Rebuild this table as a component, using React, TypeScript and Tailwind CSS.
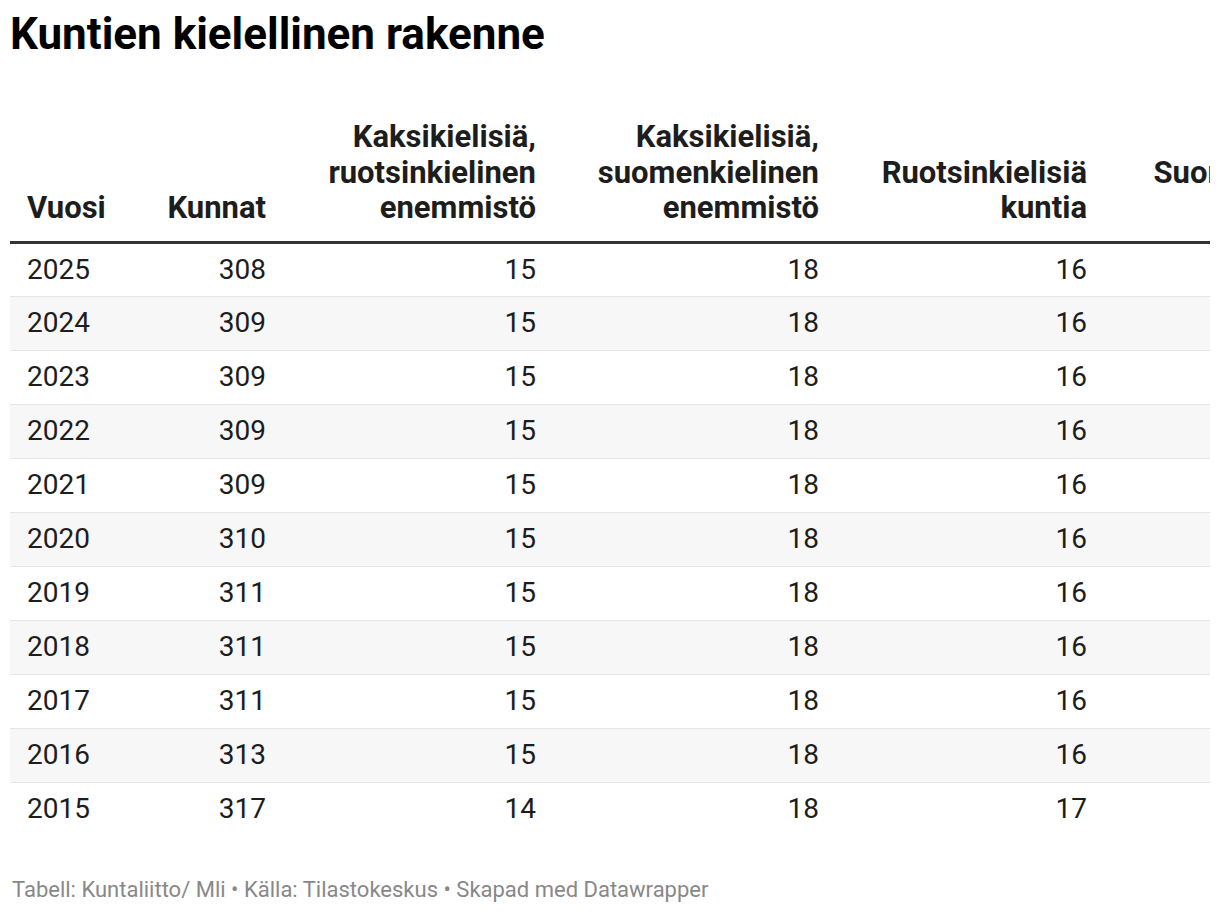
import React from "react";

const rows: [string, string, string, string, string, string][] = [
  ["2025", "308", "15", "18", "16", "259"],
  ["2024", "309", "15", "18", "16", "260"],
  ["2023", "309", "15", "18", "16", "260"],
  ["2022", "309", "15", "18", "16", "260"],
  ["2021", "309", "15", "18", "16", "260"],
  ["2020", "310", "15", "18", "16", "261"],
  ["2019", "311", "15", "18", "16", "262"],
  ["2018", "311", "15", "18", "16", "262"],
  ["2017", "311", "15", "18", "16", "262"],
  ["2016", "313", "15", "18", "16", "264"],
  ["2015", "317", "14", "18", "17", "268"],
];

const font = { fontFamily: "Roboto, 'Liberation Sans', sans-serif" };

export default function App() {
  return (
    <div className="w-[1220px] h-[912px] bg-white overflow-hidden text-[#1d1d1d]" style={font}>
      <div className="px-[10px]">
        <h1 className="pt-[8px] text-[44px] leading-[52px] font-bold text-black">
          Kuntien kielellinen rakenne
        </h1>
        <div className="mt-[59px] w-[1200px] overflow-hidden">
          <table className="table-fixed border-collapse w-[1373px]">
            <colgroup>
              <col className="w-[110px]" />
              <col className="w-[162px]" />
              <col className="w-[270px]" />
              <col className="w-[283px]" />
              <col className="w-[268px]" />
              <col className="w-[280px]" />
            </colgroup>
            <thead>
              <tr className="border-b-[3px] border-[#333333]">
                <th className="pl-[17px] pb-[15px] text-left align-bottom text-[31px] leading-[35.5px] font-bold">Vuosi</th>
                <th className="pr-[16px] pb-[15px] text-right align-bottom text-[31px] leading-[35.5px] font-bold">Kunnat</th>
                <th className="pr-[16px] pb-[15px] text-right align-bottom text-[31px] leading-[35.5px] font-bold">
                  Kaksikielisiä,<br />ruotsinkielinen<br />enemmistö
                </th>
                <th className="pr-[16px] pb-[15px] text-right align-bottom text-[31px] leading-[35.5px] font-bold">
                  Kaksikielisiä,<br />suomenkielinen<br />enemmistö
                </th>
                <th className="pr-[16px] pb-[15px] text-right align-bottom text-[31px] leading-[35.5px] font-bold">
                  Ruotsinkielisiä<br />kuntia
                </th>
                <th className="pr-[16px] pb-[15px] text-right align-bottom text-[31px] leading-[35.5px] font-bold">
                  Suomenkielisiä<br />kuntia
                </th>
              </tr>
            </thead>
            <tbody>
              {rows.map((r, i) => (
                <tr
                  key={r[0]}
                  className={
                    (i % 2 === 1 ? "bg-[#f7f7f7] " : "bg-white ") +
                    (i < rows.length - 1 ? "border-b border-[#e6e6e6]" : "")
                  }
                >
                  <td className="pl-[17px] h-[54px] text-left text-[28px] leading-[34px] align-middle">{r[0]}</td>
                  <td className="pr-[16px] h-[54px] text-right text-[28px] leading-[34px] align-middle">{r[1]}</td>
                  <td className="pr-[16px] h-[54px] text-right text-[28px] leading-[34px] align-middle">{r[2]}</td>
                  <td className="pr-[16px] h-[54px] text-right text-[28px] leading-[34px] align-middle">{r[3]}</td>
                  <td className="pr-[16px] h-[54px] text-right text-[28px] leading-[34px] align-middle">{r[4]}</td>
                  <td className="pr-[16px] h-[54px] text-right text-[28px] leading-[34px] align-middle">{r[5]}</td>
                </tr>
              ))}
            </tbody>
          </table>
        </div>
        <div className="mt-[41px] pl-[2px] text-[22px] leading-[26px] text-[#888888]">
          Tabell: Kuntaliitto/ Mli • Källa: Tilastokeskus • Skapad med Datawrapper
        </div>
      </div>
    </div>
  );
}
